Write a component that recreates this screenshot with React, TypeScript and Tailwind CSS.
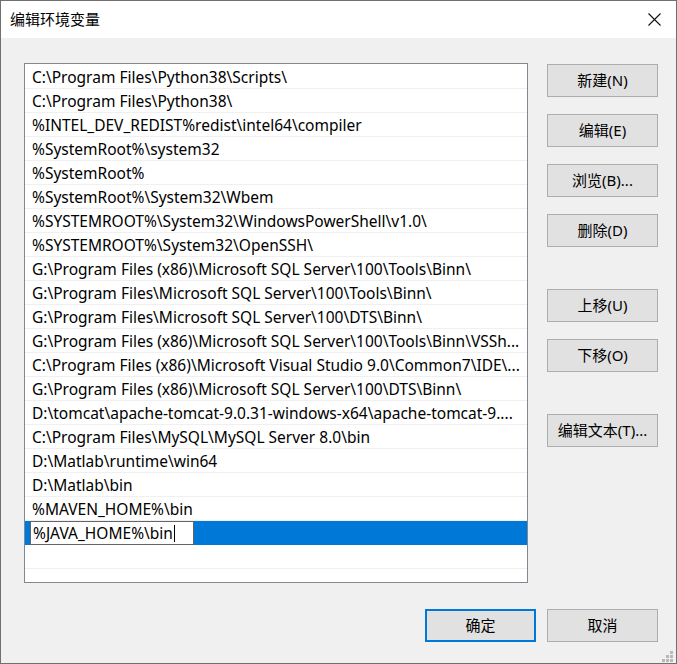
import React from "react";

const PATHS = [
  "C:\\Program Files\\Python38\\Scripts\\",
  "C:\\Program Files\\Python38\\",
  "%INTEL_DEV_REDIST%redist\\intel64\\compiler",
  "%SystemRoot%\\system32",
  "%SystemRoot%",
  "%SystemRoot%\\System32\\Wbem",
  "%SYSTEMROOT%\\System32\\WindowsPowerShell\\v1.0\\",
  "%SYSTEMROOT%\\System32\\OpenSSH\\",
  "G:\\Program Files (x86)\\Microsoft SQL Server\\100\\Tools\\Binn\\",
  "G:\\Program Files\\Microsoft SQL Server\\100\\Tools\\Binn\\",
  "G:\\Program Files\\Microsoft SQL Server\\100\\DTS\\Binn\\",
  "G:\\Program Files (x86)\\Microsoft SQL Server\\100\\Tools\\Binn\\VSSh...",
  "C:\\Program Files (x86)\\Microsoft Visual Studio 9.0\\Common7\\IDE\\...",
  "G:\\Program Files (x86)\\Microsoft SQL Server\\100\\DTS\\Binn\\",
  "D:\\tomcat\\apache-tomcat-9.0.31-windows-x64\\apache-tomcat-9....",
  "C:\\Program Files\\MySQL\\MySQL Server 8.0\\bin",
  "D:\\Matlab\\runtime\\win64",
  "D:\\Matlab\\bin",
  "%MAVEN_HOME%\\bin",
];

const FONT = "font-['Noto_Sans','Noto_Sans_CJK_SC',sans-serif]";

function Button({ label, primary }: { label: string; primary?: boolean }) {
  return (
    <button
      className={`w-[111px] h-[33px] bg-[#e1e1e1] text-[15px] text-black flex items-center justify-center ${
        primary ? "border-2 border-[#0078d7]" : "border border-[#adadad]"
      }`}
    >
      {label}
    </button>
  );
}

function ResizeGrip() {
  const dots = [
    [8, 0],
    [4, 4],
    [8, 4],
    [0, 8],
    [4, 8],
    [8, 8],
  ];
  return (
    <svg className="absolute right-[3px] bottom-[1px]" width="11" height="11" viewBox="0 0 11 11">
      {dots.map(([x, y]) => (
        <rect key={`${x}-${y}`} x={x} y={y} width="3" height="3" fill="#b9b9b9" />
      ))}
    </svg>
  );
}

export default function App() {
  return (
    <div className={`relative w-[677px] h-[664px] border border-[#707070] bg-[#f0f0f0] flex flex-col ${FONT}`}>
      {/* Title bar */}
      <div className="h-[37px] bg-white flex items-center justify-between pl-[9px] pr-[15px] flex-shrink-0">
        <span className="text-[15px] text-black">编辑环境变量</span>
        <svg width="13" height="13" viewBox="0 0 13 13">
          <path d="M0.5 0.5 L12.5 12.5 M12.5 0.5 L0.5 12.5" stroke="#111" strokeWidth="1.1" fill="none" />
        </svg>
      </div>

      {/* Body */}
      <div className="flex-1 flex flex-col pl-[23px] pr-[18px] pt-[25px]">
        <div className="flex">
          {/* Path list */}
          <div className="w-[504px] h-[520px] border border-[#828790] bg-white pt-[1px] overflow-hidden">
            {PATHS.map((p) => (
              <div
                key={p}
                className="h-[24px] border-b border-[#f0f0f0] pl-[7px] pt-[2px] flex items-center text-[15.5px] text-black whitespace-nowrap overflow-hidden"
              >
                {p}
              </div>
            ))}
            <div className="h-[24px] bg-[#0078d7] flex items-stretch">
              <div className="ml-[5px] w-[164px] h-full border border-[#646464] bg-white pl-[2px] pt-[1px] flex items-center text-[15.5px] text-black">
                %JAVA_HOME%\bin
                <span className="inline-block w-px h-[17px] bg-black ml-px" />
              </div>
            </div>
            <div className="h-[24px] border-b border-[#f0f0f0]" />
          </div>

          {/* Side buttons */}
          <div className="ml-[19px] mt-[1px] flex flex-col">
            <div className="flex flex-col gap-[17px]">
              <Button label="新建(N)" />
              <Button label="编辑(E)" />
              <Button label="浏览(B)..." />
              <Button label="删除(D)" />
            </div>
            <div className="mt-[42px] flex flex-col gap-[17px]">
              <Button label="上移(U)" />
              <Button label="下移(O)" />
            </div>
            <div className="mt-[42px]">
              <Button label="编辑文本(T)..." />
            </div>
          </div>
        </div>

        {/* Dialog buttons */}
        <div className="mt-[26px] flex justify-end gap-[11px]">
          <Button label="确定" primary />
          <Button label="取消" />
        </div>
      </div>

      <ResizeGrip />
    </div>
  );
}
